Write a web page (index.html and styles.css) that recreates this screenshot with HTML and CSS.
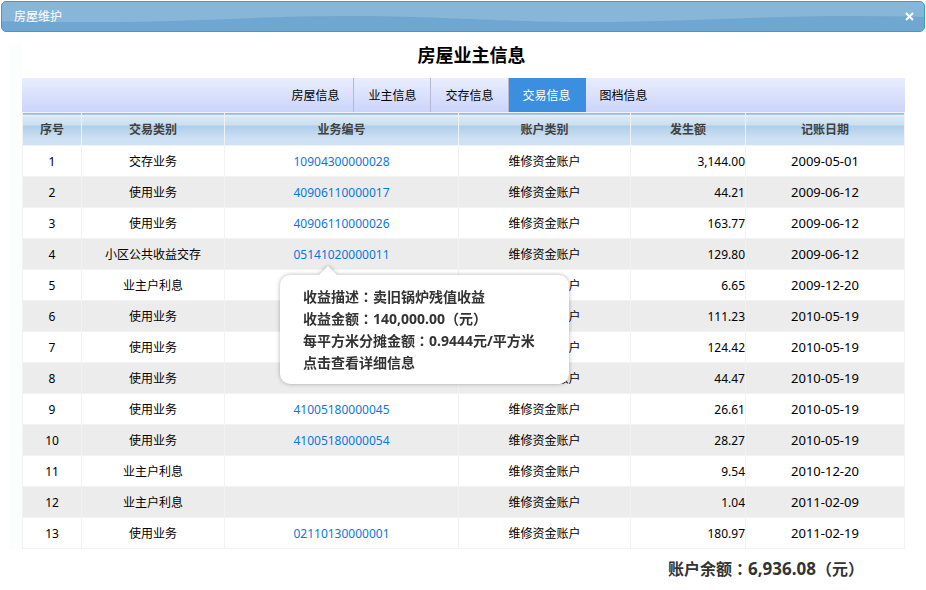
FILE: index.html
```
<!DOCTYPE html>
<html lang="zh-CN">

<head>
    <meta charset="UTF-8">
    <meta name="viewport" content="width=device-width, initial-scale=1.0">
    <title>房屋维护</title>
    <link rel="stylesheet" href="styles.css">
</head>

<body>
    <header class="titlebar">
        <svg class="wave" viewBox="0 0 926 29" preserveAspectRatio="none" aria-hidden="true">
            <path d="M0 19C40 20 60 20 100 20C190 20 260 14 350 14S500 20 590 20S760 14 850 14Q890 14 926 15V29H0Z" />
        </svg>
        <span class="titlebar-text">房屋维护</span>
        <button type="button" class="close" aria-label="关闭">
            <svg width="9" height="9" viewBox="0 0 9 9"><path d="M1 1L8 8M8 1L1 8" /></svg>
        </button>
    </header>

    <main class="content">
        <div class="panel">
            <h1>房屋业主信息</h1>

            <nav class="tabs">
                <a href="#house">房屋信息</a>
                <a href="#owner">业主信息</a>
                <a href="#deposit">交存信息</a>
                <a href="#trade" class="active">交易信息</a>
                <a href="#files">图档信息</a>
            </nav>

            <table class="records">
                <colgroup>
                    <col class="col-no">
                    <col class="col-type">
                    <col class="col-code">
                    <col class="col-account">
                    <col class="col-amount">
                    <col class="col-date">
                </colgroup>
                <thead>
                    <tr><th>序号</th><th>交易类别</th><th>业务编号</th><th>账户类别</th><th>发生额</th><th>记账日期</th></tr>
                </thead>
                <tbody>
                    <tr><td>1</td><td>交存业务</td><td><a href="#">10904300000028</a></td><td>维修资金账户</td><td class="amount">3,144.00</td><td class="date">2009-05-01</td></tr>
                    <tr><td>2</td><td>使用业务</td><td><a href="#">40906110000017</a></td><td>维修资金账户</td><td class="amount">44.21</td><td class="date">2009-06-12</td></tr>
                    <tr><td>3</td><td>使用业务</td><td><a href="#">40906110000026</a></td><td>维修资金账户</td><td class="amount">163.77</td><td class="date">2009-06-12</td></tr>
                    <tr>
                        <td>4</td>
                        <td>小区公共收益交存</td>
                        <td>
                            <div class="tip-anchor">
                                <a href="#" aria-describedby="tip">05141020000011</a>
                                <div id="tip" class="tip" role="tooltip">
                                    收益描述<span class="punct" lang="zh-TW">：</span>卖旧锅炉残值收益<br>
                                    收益金额<span class="punct" lang="zh-TW">：</span>140,000.00<span class="punct" lang="zh-TW">（</span>元<span class="punct" lang="zh-TW">）</span><br>
                                    每平方米分摊金额<span class="punct" lang="zh-TW">：</span>0.9444元/平方米<br>
                                    点击查看详细信息
                                </div>
                            </div>
                        </td>
                        <td>维修资金账户</td>
                        <td class="amount">129.80</td>
                        <td class="date">2009-06-12</td>
                    </tr>
                    <tr><td>5</td><td>业主户利息</td><td></td><td>维修资金账户</td><td class="amount">6.65</td><td class="date">2009-12-20</td></tr>
                    <tr><td>6</td><td>使用业务</td><td></td><td>维修资金账户</td><td class="amount">111.23</td><td class="date">2010-05-19</td></tr>
                    <tr><td>7</td><td>使用业务</td><td></td><td>维修资金账户</td><td class="amount">124.42</td><td class="date">2010-05-19</td></tr>
                    <tr><td>8</td><td>使用业务</td><td></td><td>维修资金账户</td><td class="amount">44.47</td><td class="date">2010-05-19</td></tr>
                    <tr><td>9</td><td>使用业务</td><td><a href="#">41005180000045</a></td><td>维修资金账户</td><td class="amount">26.61</td><td class="date">2010-05-19</td></tr>
                    <tr><td>10</td><td>使用业务</td><td><a href="#">41005180000054</a></td><td>维修资金账户</td><td class="amount">28.27</td><td class="date">2010-05-19</td></tr>
                    <tr><td>11</td><td>业主户利息</td><td></td><td>维修资金账户</td><td class="amount">9.54</td><td class="date">2010-12-20</td></tr>
                    <tr><td>12</td><td>业主户利息</td><td></td><td>维修资金账户</td><td class="amount">1.04</td><td class="date">2011-02-09</td></tr>
                    <tr><td>13</td><td>使用业务</td><td><a href="#">02110130000001</a></td><td>维修资金账户</td><td class="amount">180.97</td><td class="date">2011-02-19</td></tr>
                </tbody>
            </table>
        </div>
    </main>

    <div class="balance">账户余额<span class="punct" lang="zh-TW">：</span><span class="sum">6,936.08</span><span class="punct" lang="zh-TW">（</span>元<span class="punct" lang="zh-TW">）</span></div>
</body>

</html>
```

FILE: styles.css
```
* {
    box-sizing: border-box;
}

body {
    margin: 0;
    padding: 1px;
    font-family: "Noto Sans", "Noto Sans CJK SC", sans-serif;
    font-size: 12px;
    line-height: 18px;
    color: #000;
    background: #fff;
}

a {
    color: #0b77df;
    text-decoration: none;
}

/* fullwidth punctuation sits in the middle of its cell */
.punct {
    font-family: "Noto Sans CJK TC", sans-serif;
    line-height: 1;
}

/* title bar */
.titlebar {
    position: relative;
    display: flex;
    align-items: center;
    justify-content: space-between;
    height: 31px;
    padding: 0 8px 0 12px;
    border: 1px solid #4297d7;
    border-radius: 5px;
    background: #87b6d9;
    color: #fff;
    overflow: hidden;
}

.wave {
    position: absolute;
    top: 0;
    left: 0;
    width: 100%;
    height: 100%;
    fill: #6fa7d1;
}

.titlebar-text {
    position: relative;
}

.close {
    position: relative;
    display: flex;
    padding: 2px;
    border: 0;
    background: none;
    cursor: pointer;
}

.close path {
    stroke: #fff;
    stroke-width: 2;
}

/* main area */
.content {
    margin: 12px 4px 0 8px;
    padding-left: 13px;
    background: #fcfdfd;
}

.panel {
    background: #fff;
}

h1 {
    margin: 0;
    padding-bottom: 12px;
    font-size: 18px;
    line-height: 22px;
    text-align: center;
}

.tabs {
    display: flex;
    justify-content: center;
    height: 34px;
    margin-right: 16px;
    padding-left: 12px;
    background: linear-gradient(#e9edfe, #cbd5fb);
}

.tabs a {
    padding: 0 14px;
    border-right: 1px solid #b3b9d2;
    line-height: 35px;
    color: #000;
}

.tabs a:last-child {
    border-right: 0;
}

.tabs .active {
    border-color: #3c8ee0;
    background: #3c8ee0;
    color: #fff;
}

/* records */
.records {
    width: calc(100% - 16px);
    border-collapse: collapse;
    table-layout: fixed;
}

.col-no {
    width: 59px;
}

.col-type {
    width: 143px;
}

.col-code {
    width: 234px;
}

.col-account {
    width: 172px;
}

.col-amount {
    width: 115px;
}

.records th,
.records td {
    padding: 7px 0 5px;
    border: 1px solid #f2f2f2;
    text-align: center;
    vertical-align: baseline;
}

.records th {
    padding: 8px 0 6px;
    color: #404040;
    background: linear-gradient(#5f9bd0 1px, #eef4f9 1px, #eef4f9 2px, #dae8f5 3px, #c9dff1 12px, #aecdea 12px, #cfe1f4 26px);
}

.records tbody tr:nth-child(even) {
    background: #ececec;
}

.records .amount {
    text-align: right;
}

.date {
    font-size: 13px;
    line-height: 16px;
}

/* tooltip over the rows */
.tip-anchor {
    position: relative;
}

.tip {
    position: absolute;
    top: 29px;
    left: 55px;
    z-index: 10;
    width: 289px;
    padding: 11px 23px 10px;
    border-radius: 10px;
    background: #fff;
    filter: drop-shadow(0 0 2px rgba(0, 0, 0, 0.3));
    font-size: 14px;
    font-weight: bold;
    line-height: 22px;
    text-align: left;
    white-space: nowrap;
    color: #333;
}

.tip::before {
    content: "";
    position: absolute;
    top: -9px;
    left: 39px;
    border: 9px solid transparent;
    border-top: 0;
    border-bottom-color: #fff;
}

.balance {
    padding: 8px 61px 0 0;
    font-size: 16px;
    font-weight: bold;
    line-height: 24px;
    text-align: right;
    color: #333;
}

.sum {
    font-size: 17px;
}
```
